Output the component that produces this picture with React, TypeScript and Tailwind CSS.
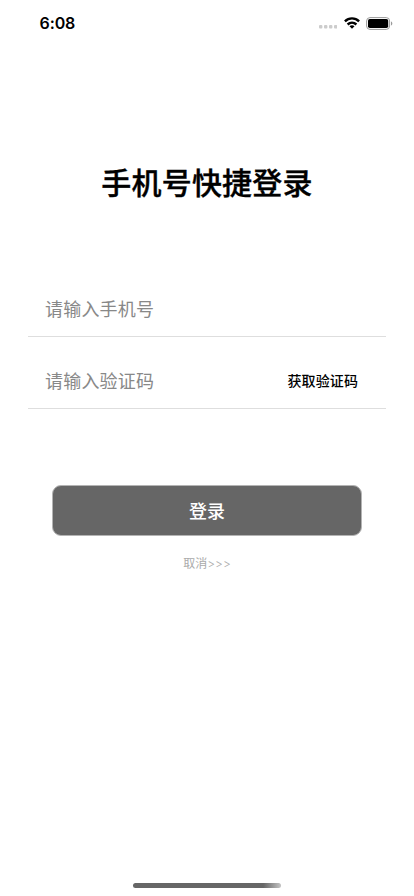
import React, { useState } from 'react';

function StatusBar() {
  return (
    <div className="flex h-11 items-center justify-between pl-[39.5px] pr-[21px] pt-[2px]">
      <span className="font-['Inter'] text-[16px] leading-5 font-semibold tracking-[-0.1px] text-black">6:08</span>
      <div className="flex items-center">
        <svg className="mt-[8px] mr-[7px]" width="18" height="4" viewBox="0 0 18 4" fill="#cccccc">
          <rect x="0" width="3.400" height="3.600" rx="1" />
          <rect x="5" width="3.400" height="3.600" rx="1" />
          <rect x="10" width="3.400" height="3.600" rx="1" />
          <rect x="15" width="3.400" height="3.600" rx="1" />
        </svg>
        <svg className="mr-[6px]" width="16" height="12" viewBox="0 0 16 12" fill="none" stroke="black" strokeWidth="2.400">
          <path d="M0.900 4.300c4-3.900 10.200-3.900 14.200 0" />
          <path d="M3.600 7.500c2.500-2.300 6.300-2.300 8.800 0" />
          <path d="M10.500 9.200 8 11.800 5.500 9.200c1.400-1.200 3.600-1.200 5 0z" fill="black" stroke="none" />
        </svg>
        <svg width="27" height="13" viewBox="0 0 27 13">
          <rect x="0.600" y="0.600" width="23" height="11.800" rx="3.400" fill="none" stroke="#9a9a9a" />
          <rect x="2" y="2" width="20.200" height="9" rx="1.800" fill="black" />
          <path d="M25 4.500v4c.8-.3 1.300-1.100 1.300-2s-.5-1.700-1.300-2z" fill="#9a9a9a" />
        </svg>
      </div>
    </div>
  );
}

export default function App() {
  const [phone, setPhone] = useState('');
  const [code, setCode] = useState('');
  return (
    <div className="flex h-[896px] w-[414px] flex-col bg-white font-['Liberation_Sans','Noto_Sans_CJK_SC',sans-serif]">
      <StatusBar />
      <h1 className="mt-[118px] text-center text-[30px] leading-[44px] font-medium tracking-[0.2px] text-black [-webkit-text-stroke:0.350px_black]">手机号快捷登录</h1>

      <form className="mt-[74px] flex flex-col px-7" onSubmit={e => e.preventDefault()}>
        <div className="flex h-[57px] items-center border-b border-[#dedede] px-[17px] pt-[5px]">
          <input
            type="tel"
            placeholder="请输入手机号"
            value={phone}
            onChange={e => setPhone(e.target.value)}
            className="h-10 w-full text-[18px] tracking-[0.2px] outline-none placeholder:text-[#888888]"
          />
        </div>
        <div className="mt-[15px] flex h-[57px] items-center border-b border-[#dedede] pt-[5px] pr-7 pl-[17px]">
          <input
            type="text"
            placeholder="请输入验证码"
            value={code}
            onChange={e => setCode(e.target.value)}
            className="h-10 min-w-0 flex-1 text-[18px] tracking-[0.2px] outline-none placeholder:text-[#888888]"
          />
          <button type="button" className="pb-[2px] text-[14px] font-medium tracking-[0.1px] whitespace-nowrap text-black">获取验证码</button>
        </div>
        <button type="submit" className="mt-[76px] mr-[24px] ml-[24px] h-[51px] rounded-[9px] border border-[#b4b4b4] bg-[#666666] pt-[3px] text-[18px] font-medium text-white">
          登录
        </button>
        <button type="button" className="mt-[18px] self-center text-[12px] leading-5 text-[#aaaaaa]">
          取消<span className="font-['Inter'] font-light">&gt;&gt;&gt;</span>
        </button>
      </form>

      <div className="mt-auto mb-[8px] ml-[133px] h-[5px] w-[148px] rounded-full bg-linear-to-r from-[#666666] from-88% to-[#c4c4c4]" />
    </div>
  );
}
